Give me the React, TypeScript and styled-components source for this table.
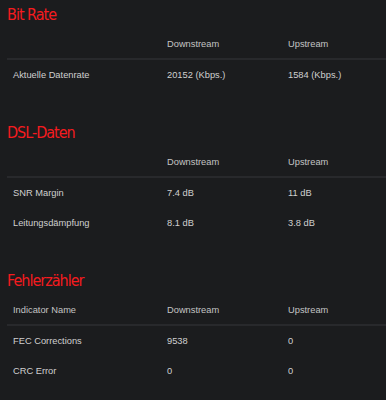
import styled, { createGlobalStyle } from 'styled-components';

const GlobalStyle = createGlobalStyle`
  html, body {
    margin: 0;
    padding: 0;
    background: #1b1c1e;
  }
  body {
    font-family: 'Liberation Sans', Arial, sans-serif;
  }
`;

interface Row {
  name: string;
  down: string;
  up: string;
}

interface Section {
  title: string;
  head: string;
  rows: Row[];
}

const sections: Section[] = [
  {
    title: 'Bit Rate',
    head: '',
    rows: [{ name: 'Aktuelle Datenrate', down: '20152 (Kbps.)', up: '1584 (Kbps.)' }],
  },
  {
    title: 'DSL-Daten',
    head: '',
    rows: [
      { name: 'SNR Margin', down: '7.4 dB', up: '11 dB' },
      { name: 'Leitungsdämpfung', down: '8.1 dB', up: '3.8 dB' },
    ],
  },
  {
    title: 'Fehlerzähler',
    head: 'Indicator Name',
    rows: [
      { name: 'FEC Corrections', down: '9538', up: '0' },
      { name: 'CRC Error', down: '0', up: '0' },
    ],
  },
];

const App = () => {
  return (
    <Page>
      <GlobalStyle />
      {sections.map((section) => (
        <SectionBlock key={section.title}>
          <SectionTitle>{section.title}</SectionTitle>
          <Table>
            <HeadCell>{section.head}</HeadCell>
            <HeadCell>Downstream</HeadCell>
            <HeadCell>Upstream</HeadCell>
            {section.rows.map((row) => (
              <Line key={row.name}>
                <Cell>{row.name}</Cell>
                <Cell>{row.down}</Cell>
                <Cell>{row.up}</Cell>
              </Line>
            ))}
          </Table>
        </SectionBlock>
      ))}
    </Page>
  );
};

export default App;

const Page = styled.div`
  width: 386px;
  height: 400px;
  padding-left: 7px;
  box-sizing: border-box;
  background: #1b1c1e;
  overflow: hidden;
`;

const SectionBlock = styled.section`
  display: flex;
  flex-direction: column;
  & + & {
    margin-top: 28px;
  }
`;

const SectionTitle = styled.h2`
  margin: 0;
  height: 30px;
  line-height: 30px;
  font-family: 'DejaVu Sans Condensed', 'Liberation Sans', sans-serif;
  font-size: 16px;
  font-weight: normal;
  letter-spacing: -1px;
  color: #f51b1f;
`;

const Table = styled.div`
  display: grid;
  grid-template-columns: 154px 121px 1fr;
`;

const Line = styled.div`
  display: contents;
`;

const HeadCell = styled.div`
  height: 28px;
  line-height: 28px;
  padding-left: 6px;
  border-bottom: 2px solid #28292c;
  font-size: 9.3px;
  color: #c4c4c4;
  white-space: nowrap;
`;

const Cell = styled.div`
  height: 30px;
  line-height: 30px;
  padding-left: 6px;
  font-size: 9.3px;
  color: #d0d0d0;
  white-space: nowrap;
`;
